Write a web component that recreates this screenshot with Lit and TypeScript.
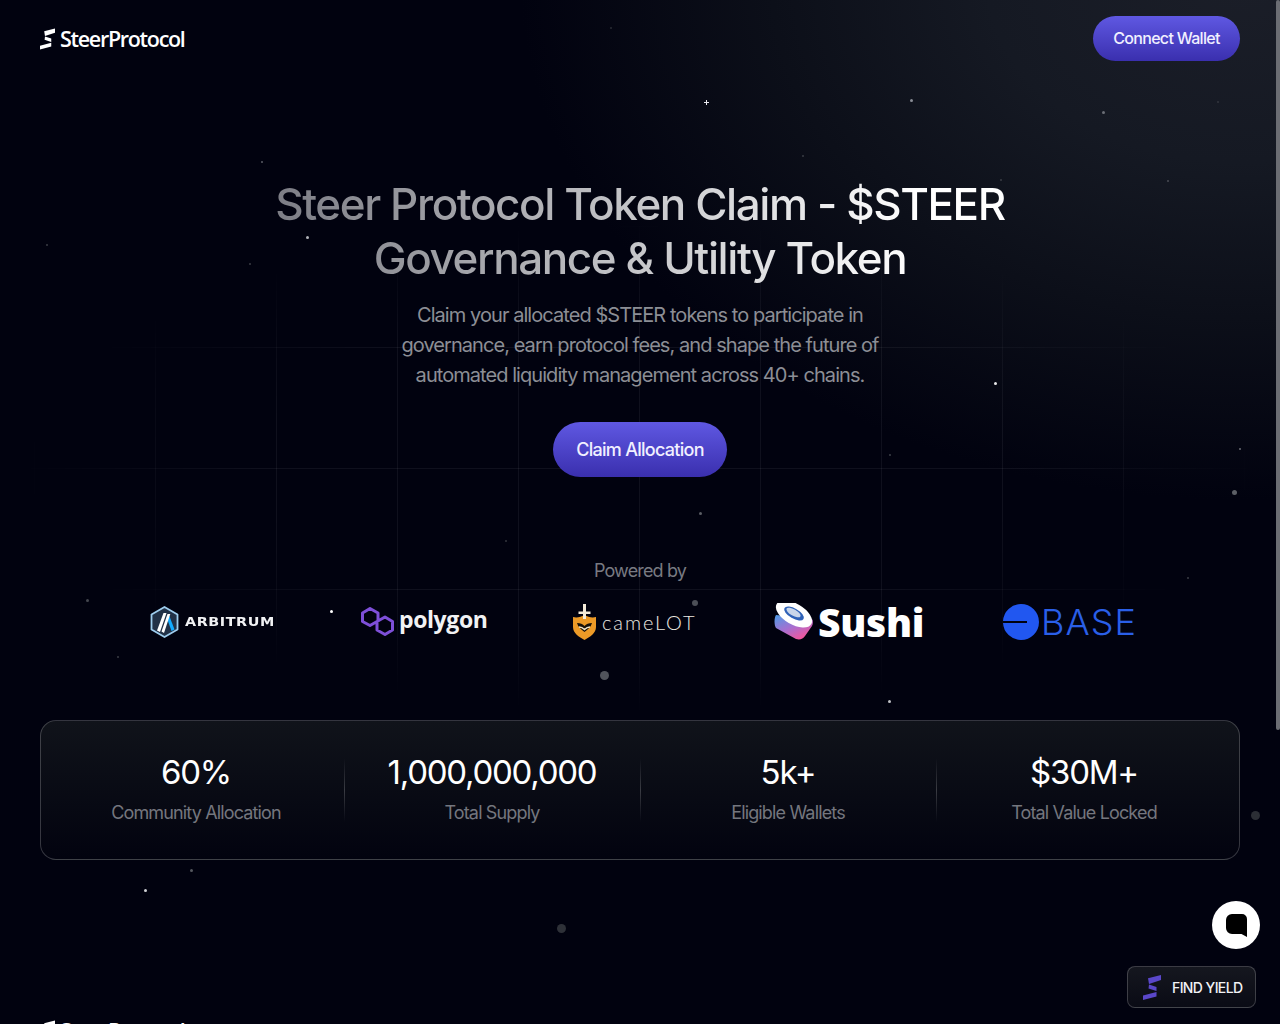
import { LitElement, html, css, svg } from "lit";
import { customElement } from "lit/decorators.js";

const stars: [number, number, number, string][] = [
  [911,100,3,"#8a8d96"],[1103,112,3,"#6b6e76"],[262,162,2,"#5a5d66"],[1168,181,2,"#4a4d55"],
  [307,237,3,"#b0b2b8"],[250,264,2,"#3a3d45"],[47,245,2,"#3a3d45"],[995,383,3,"#e8e8ea"],[1234,492,5,"#5c5f66"],
  [1240,449,2,"#6a6d74"],[890,455,2,"#3d4048"],[700,513,3,"#5a5d64"],[506,541,2,"#33363e"],[1188,578,2,"#3a3d45"],
  [87,600,3,"#44474f"],[331,611,3,"#fff"],[695,603,6,"#4c4f57"],[604,675,9,"#50535b"],[118,657,2,"#3a3d45"],
  [889,701,3,"#c0c2c6"],[1255,815,9,"#2b2e35"],[145,890,3,"#d0d2d6"],[191,870,3,"#55585f"],[561,928,9,"#2e3138"],
  [611,28,2,"#2a2d35"],[1218,102,2,"#33363e"],[803,156,2,"#3a3d45"],[1001,180,2,"#3a3d45"],[870,842,2,"#2a2d35"],
];

const steerMark = (cls: string, fill: string) => svg`<svg class=${cls} viewBox="0 0 18 25" fill=${fill}>
  <path d="M5 3.200 18 0v5L6 9z"/>
  <path d="M6 9.500 13.500 12v4L5.500 13.500z"/>
  <path d="M0 20.500 13.500 17v4.500L0 25z"/>
</svg>`;

@customElement("app-root")
export class AppRoot extends LitElement {
  static styles = css`
    :host {
      display: block;
      position: relative;
      height: 1024px;
      overflow: hidden;
      background: #01020f;
      color: #fff;
      font-family: Inter, "Liberation Sans", sans-serif;
    }
    .glow {
      position: absolute;
      inset: 0;
      pointer-events: none;
      background: radial-gradient(ellipse 720px 520px at 1240px -20px, #1b1e28 0%, #151923 35%, #0c0f19 65%, rgba(1, 2, 15, 0) 100%);
    }
    .grid {
      position: absolute;
      left: 30px;
      top: 226px;
      width: 1218px;
      height: 484px;
      pointer-events: none;
      background-image:
        linear-gradient(to right, rgba(255, 255, 255, 0.06) 1px, transparent 1px),
        linear-gradient(to bottom, rgba(255, 255, 255, 0.06) 1px, transparent 1px);
      background-size: 121px 121px;
      background-position: 4px 0;
      -webkit-mask-image: radial-gradient(ellipse 52% 52% at 50% 50%, #000 60%, transparent 100%);
      mask-image: radial-gradient(ellipse 52% 52% at 50% 50%, #000 60%, transparent 100%);
    }
    .star {
      position: absolute;
      border-radius: 50%;
      pointer-events: none;
    }
    .cross {
      position: absolute;
      left: 704px;
      top: 100px;
      width: 5px;
      height: 5px;
      pointer-events: none;
      background:
        linear-gradient(#e8e8ee, #e8e8ee) center / 5px 1px no-repeat,
        linear-gradient(#e8e8ee, #e8e8ee) center / 1px 5px no-repeat;
    }
    .page {
      position: relative;
      padding: 0 40px;
    }
    header {
      display: flex;
      align-items: center;
      justify-content: space-between;
      padding: 16px 0;
    }
    .brand {
      display: flex;
      align-items: center;
      gap: 5px;
      font-family: "Open Sans", sans-serif;
      font-size: 21.5px;
      font-weight: 600;
      letter-spacing: -1.3px;
      line-height: 26px;
    }
    .mark { width: 15px; height: 22px; flex: none; }
    .btn {
      border: 0;
      border-radius: 999px;
      color: #f1f0ff;
      font-family: inherit;
      font-weight: 500;
      background: linear-gradient(180deg, #5f58e2 0%, #3a2fae 100%);
      display: flex;
      align-items: center;
      justify-content: center;
    }
    .connect { width: 147px; height: 45px; font-size: 16px; letter-spacing: -0.7px; padding-bottom: 2px; }
    .hero {
      margin-top: 100px;
      display: flex;
      flex-direction: column;
      align-items: center;
      text-align: center;
    }
    h1 {
      margin: 0;
      font-size: 44px;
      line-height: 54px;
      font-weight: 500;
      letter-spacing: -1.42px;
      background: linear-gradient(90deg, #7c7d85 0%, #ffffff 88%);
      -webkit-background-clip: text;
      background-clip: text;
      color: transparent;
    }
    .sub {
      margin: 15px 0 0;
      width: 500px;
      font-size: 20px;
      line-height: 30px;
      letter-spacing: -0.94px;
      color: #8c8e95;
    }
    .claim { margin-top: 32px; width: 174px; height: 55px; font-size: 18px; letter-spacing: -0.72px; }
    .powered {
      margin-top: 83px;
      font-size: 18px;
      line-height: 22px;
      letter-spacing: -0.85px;
      color: #787a82;
    }
    .logos {
      margin: 13px 0 0 110px;
      height: 44px;
      display: grid;
      grid-template-columns: 211px 211px 202px 229px 132px;
      align-items: center;
      justify-content: start;
      align-self: flex-start;
      text-align: left;
    }
    .logo { display: flex; align-items: center; }
    .logo svg { flex: none; display: block; }
    .arb { gap: 6px; font-family: "DejaVu Sans", sans-serif; font-size: 11.5px; font-weight: 700; letter-spacing: 0.45px; color: #f1f2f4; }
    .arb span { display: inline-block; transform: scaleX(1.25); transform-origin: left center; }
    .poly { gap: 5px; font-family: "Open Sans", sans-serif; font-size: 23px; font-weight: 700; letter-spacing: -0.4px; color: #f1f2f4; }
    .poly span { padding-bottom: 5px; }
    .cam { gap: 5px; font-family: "Lato", sans-serif; font-size: 20px; font-weight: 300; letter-spacing: 1.9px; color: #ece9e2; }
    .sushi { gap: 5px; font-family: "Open Sans", sans-serif; font-size: 39px; font-weight: 800; letter-spacing: -0.3px; color: #fff; }
    .base { gap: 2px; font-family: Inter, sans-serif; font-size: 36px; font-weight: 300; letter-spacing: 1.05px; color: #2a5fe8; }
    .stats {
      margin-top: 81px;
      height: 140px;
      box-sizing: border-box;
      border: 1px solid rgba(255, 255, 255, 0.2);
      border-radius: 16px;
      background: linear-gradient(180deg, #10131a 0%, #02030f 100%);
      padding: 0 7px;
      display: grid;
      grid-template-columns: repeat(4, 1fr);
      align-items: center;
    }
    .stat {
      position: relative;
      text-align: center;
      padding-bottom: 5px;
    }
    .stat + .stat::before {
      content: "";
      position: absolute;
      left: 0;
      top: 8px;
      bottom: 8px;
      width: 1px;
      background: linear-gradient(180deg, transparent, rgba(255, 255, 255, 0.2), transparent);
    }
    .num { font-size: 33px; line-height: 44px; font-weight: 400; letter-spacing: -1.25px; color: #fff; }
    .lbl { margin-top: 7px; font-size: 18px; line-height: 24px; letter-spacing: -0.85px; color: #74767e; }
    footer { margin-top: 158px; }
    .chat {
      position: absolute;
      left: 1212px;
      top: 901px;
      width: 48px;
      height: 48px;
      border-radius: 50%;
      background: #fff;
      display: flex;
      align-items: center;
      justify-content: center;
    }
    .chat svg { width: 21px; height: 23px; }
    .yield {
      position: absolute;
      left: 1127px;
      top: 966px;
      width: 129px;
      height: 42px;
      box-sizing: border-box;
      border: 1px solid rgba(255, 255, 255, 0.2);
      border-radius: 8px;
      background: linear-gradient(180deg, #15171f 0%, #0a0b15 100%);
      display: flex;
      align-items: center;
      gap: 11px;
      padding-left: 15px;
      font-size: 14px;
      font-weight: 500;
      letter-spacing: -0.6px;
      color: #f2f2f5;
    }
    .ymark { width: 18px; height: 25px; }
    .thumb {
      position: absolute;
      right: 0;
      top: 0;
      width: 4px;
      height: 730px;
      border-radius: 2px;
      background: #6b6d73;
    }
  `;

  render() {
    const stats = [
      ["60%", "Community Allocation"],
      ["1,000,000,000", "Total Supply"],
      ["5k+", "Eligible Wallets"],
      ["$30M+", "Total Value Locked"],
    ];
    return html`
      <div class="glow"></div>
      <div class="grid"></div>
      <i class="cross"></i>
      ${stars.map(([x, y, s, c]) => html`<i class="star" style="left:${x - s / 2}px;top:${y - s / 2}px;width:${s}px;height:${s}px;background:${c}"></i>`)}
      <div class="page">
        <header>
          <div class="brand">${steerMark("mark", "#fff")}<span>SteerProtocol</span></div>
          <button class="btn connect">Connect Wallet</button>
        </header>
        <section class="hero">
          <h1>Steer Protocol Token Claim - $STEER<br />Governance &amp; Utility Token</h1>
          <p class="sub">Claim your allocated $STEER tokens to participate in governance, earn protocol fees, and shape the future of automated liquidity management across 40+ chains.</p>
          <button class="btn claim">Claim Allocation</button>
          <div class="powered">Powered by</div>
          <div class="logos">
            <div class="logo arb">
              <svg width="29" height="32" viewBox="0 0 29 32">
                <path d="M14.5 1 27.5 8.5v15L14.5 31 1.500 23.500v-15z" fill="#213147" stroke="#9dcced" stroke-width="1.800" stroke-linejoin="round"/>
                <path d="M16.500 11 21.500 25 24.500 23.500 19 9z" fill="#12aaff"/>
                <path d="M7 24.500 13.500 7h3L10 26z" fill="#fff"/>
                <path d="M11.500 25.500 17.500 8h2.800L14 27z" fill="#fff"/>
              </svg>
              <span>ARBITRUM</span>
            </div>
            <div class="logo poly">
              <svg width="33" height="29" viewBox="0 0 33 29" fill="none" stroke="#7e4fd8" stroke-width="3" stroke-linejoin="round">
                <path d="M17 13V6L9 1.500 1.500 6v8.500L9 18.500l11-6.200L24 10l7.500 4.500V23L24 27.500 16 23v-8"/>
              </svg>
              <span>polygon</span>
            </div>
            <div class="logo cam">
              <svg width="25" height="36" viewBox="0 0 25 36">
                <path d="M1 13c4 1 8 0 11.500-2C16 13 20 14 24 13v10c0 6-6 10-11.500 13C7 33 1 29 1 23z" fill="#ec9a27"/>
                <path d="M5 19c3 0 6 1 7.500 3 1.500-2 4.500-3 7.500-3-1 4-4 6-7.500 9C9 25 6 23 5 19z" fill="#16110a"/>
                <path d="M7 23c2.500 0 4 1 5.500 2.500C14 24 15.500 23 18 23" stroke="#f4e6c8" stroke-width="1.500" fill="none"/>
                <path d="M11 0h3v7.500h4.500v2.500H14v5h-3v-5H6.500V7.500H11z" fill="#f3ead8"/>
              </svg>
              <span>cameLOT</span>
            </div>
            <div class="logo sushi">
              <svg width="39" height="37" viewBox="0 0 39 37">
                <defs>
                  <linearGradient id="sg" x1="0" y1="0" x2="0.7" y2="1">
                    <stop offset="0" stop-color="#4b9ce6"/>
                    <stop offset=".55" stop-color="#a86fd0"/>
                    <stop offset="1" stop-color="#f5559a"/>
                  </linearGradient>
                </defs>
                <path d="M2 12C0 15 0 22 2 25L22 36c4 1 7 0 9-3l7-10c1-2 1.500-5 0-7z" fill="url(#sg)"/>
                <ellipse cx="20" cy="11" rx="20" ry="10.500" transform="rotate(30 20 11)" fill="#fff"/>
                <ellipse cx="20" cy="10.500" rx="11" ry="5" transform="rotate(30 20 10.500)" fill="#2f62b8"/>
                <ellipse cx="19.500" cy="9.500" rx="8" ry="3.200" transform="rotate(30 19.500 9.500)" fill="#c9d6ea"/>
              </svg>
              <span>Sushi</span>
            </div>
            <div class="logo base">
              <svg width="36" height="36" viewBox="0 0 36 36">
                <path d="M18 0a18 18 0 1 1 0 36A18 18 0 0 1 0 19h24v-2H0A18 18 0 0 1 18 0z" fill="#2157f0"/>
              </svg>
              <span>BASE</span>
            </div>
          </div>
        </section>
        <section class="stats">
          ${stats.map(([n, l]) => html`<div class="stat"><div class="num">${n}</div><div class="lbl">${l}</div></div>`)}
        </section>
        <footer>
          <div class="brand">${steerMark("mark", "#fff")}<span>SteerProtocol</span></div>
        </footer>
      </div>
      <div class="chat">
        <svg viewBox="0 0 21 23"><path d="M6 0h10a5 5 0 0 1 5 5v18l-5.500-3H6a6 6 0 0 1-6-6V6a6 6 0 0 1 6-6z" fill="#000"/></svg>
      </div>
      <div class="yield">${steerMark("ymark", "#5a47c9")}<span>FIND YIELD</span></div>
      <div class="thumb"></div>
    `;
  }
}
